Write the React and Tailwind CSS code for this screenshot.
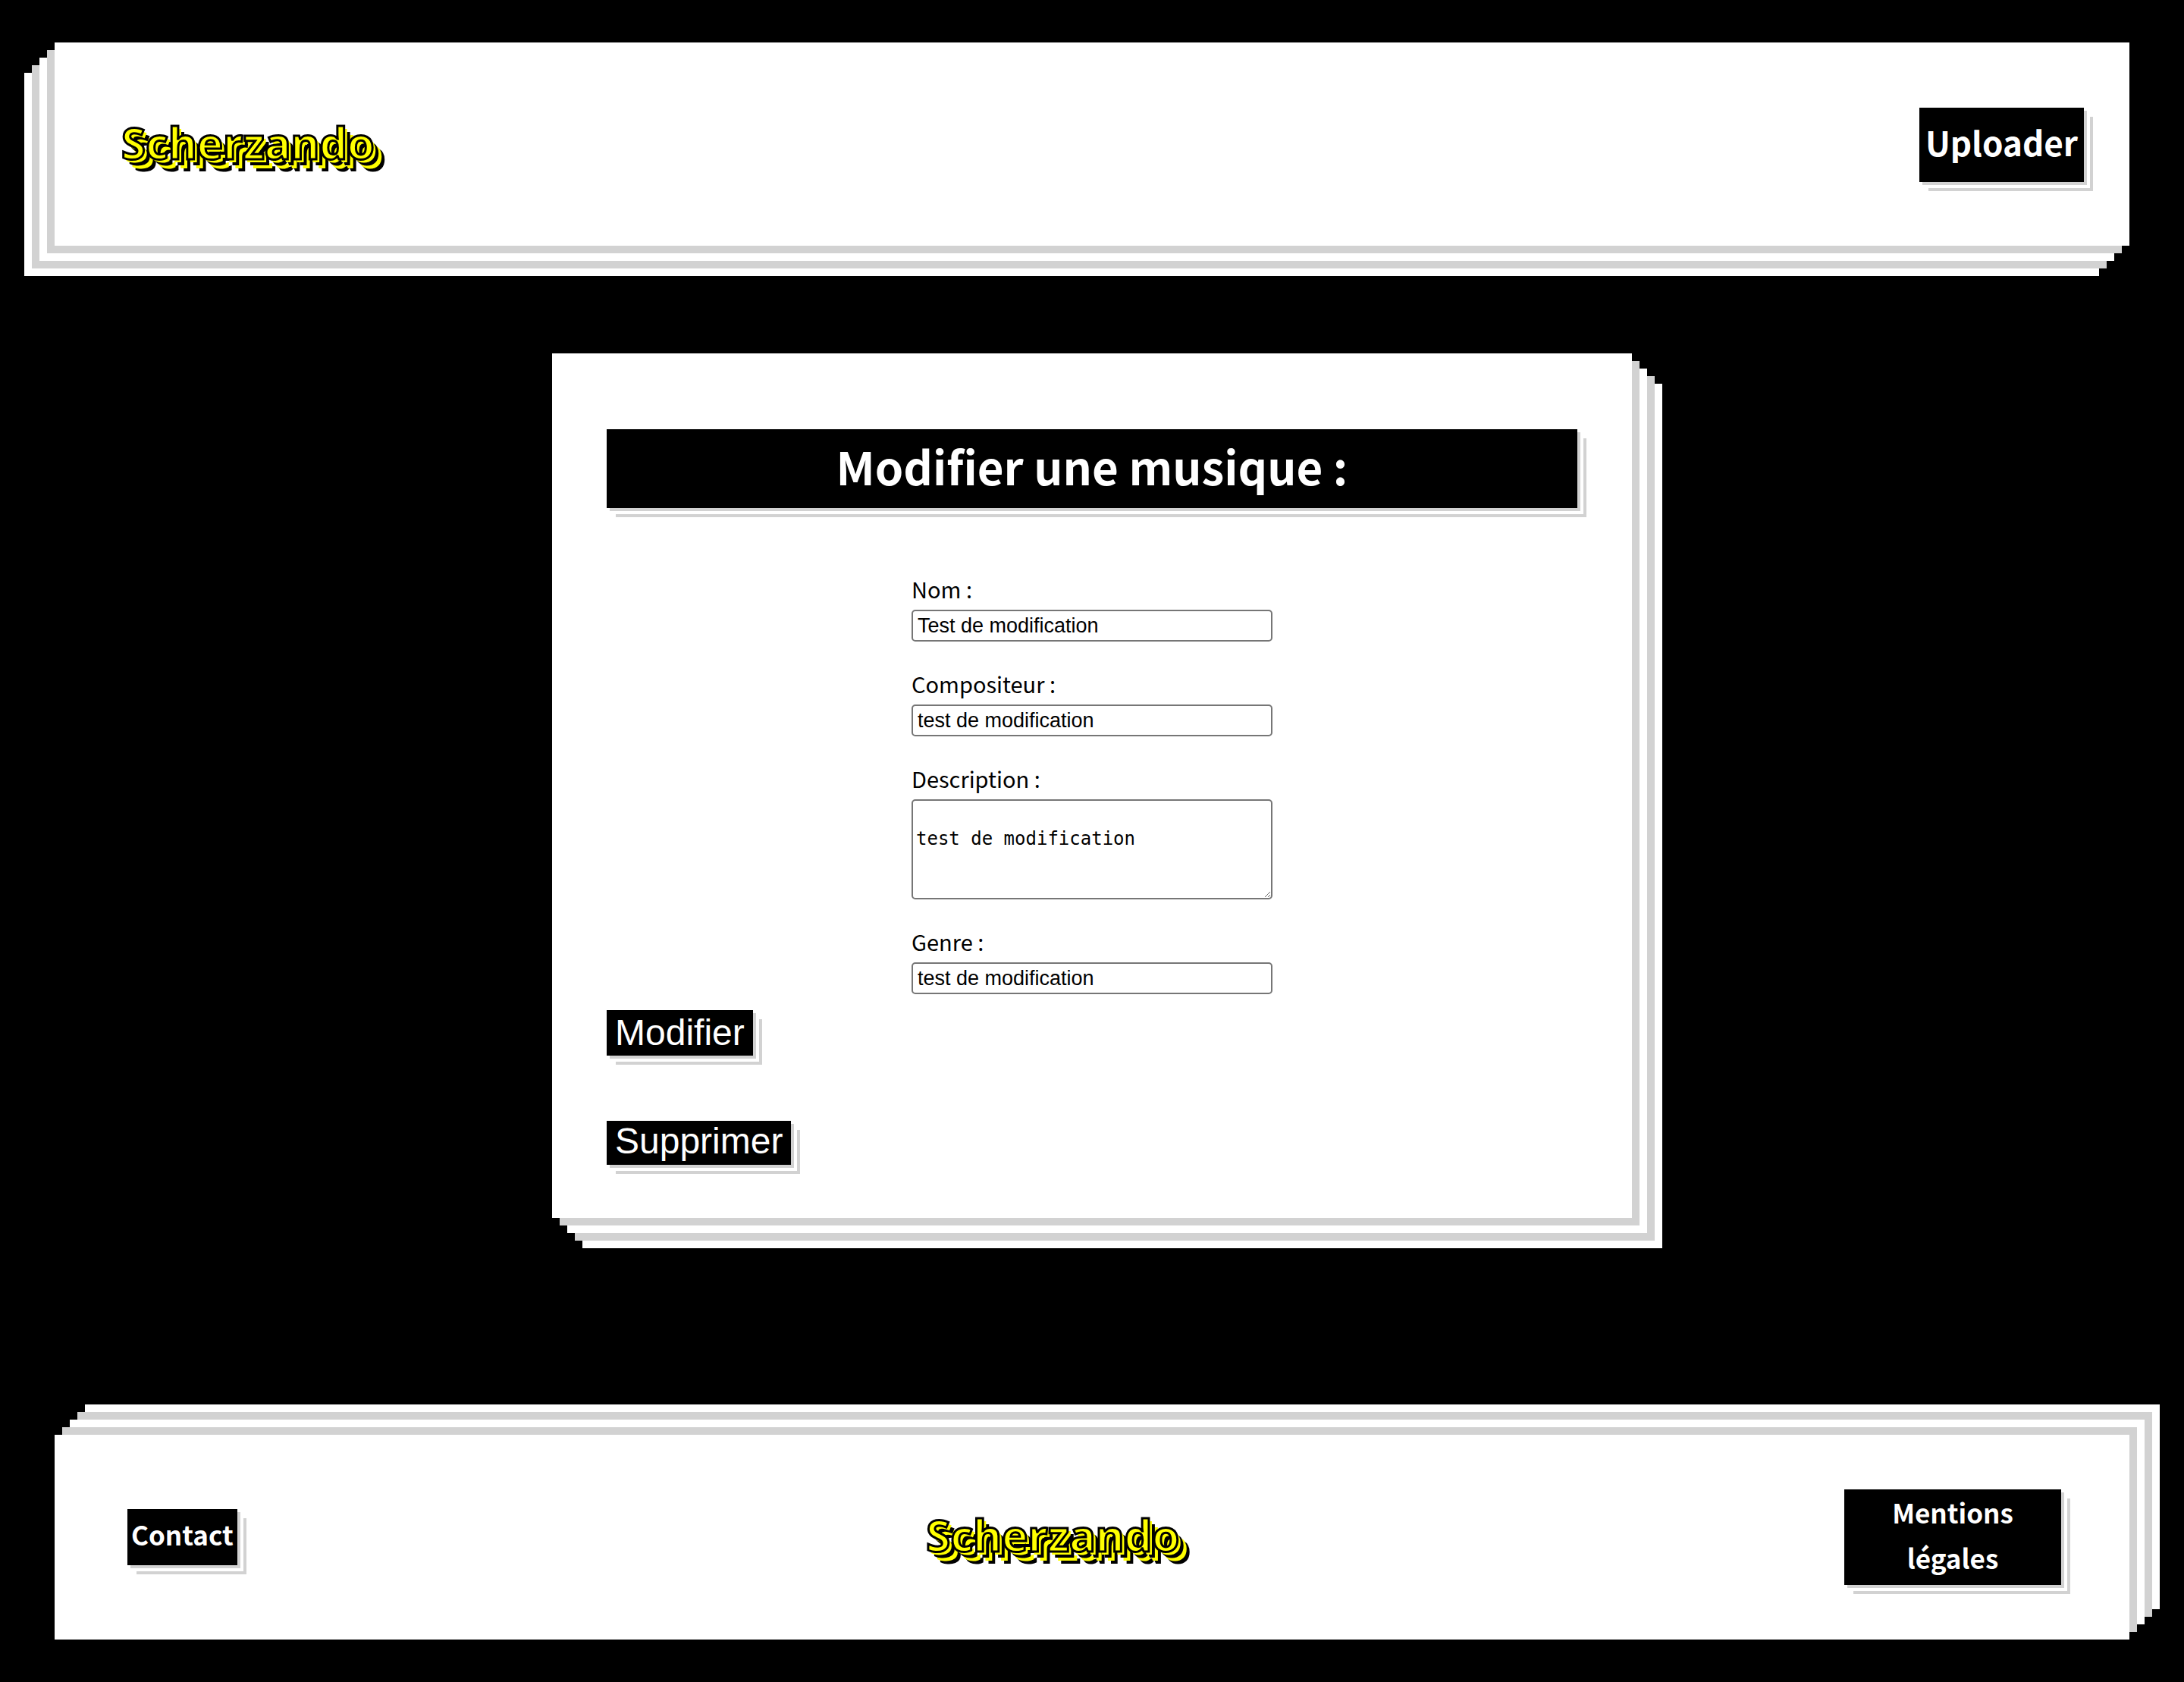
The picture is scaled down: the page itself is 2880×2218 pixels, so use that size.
const sans = "font-['Noto_Sans_CJK_SC',sans-serif]";
const tag =
  "bg-black text-white shadow-[4px_4px_0_#d2d2d2,8px_8px_0_#fff,12px_12px_0_#d2d2d2]";

function Logo({ className = "" }) {
  return (
    <a
      href="#accueil"
      className={`pb-1.5 font-['Noto_Sans',sans-serif] text-[58px] leading-[72px] font-bold text-[#ffff00] [-webkit-text-stroke:3px_#000] [text-shadow:4px_4px_0_#ff0,8px_8px_0_#000,12px_12px_0_#ff0,16px_16px_0_#000] ${className}`}
    >
      Scherzando
    </a>
  );
}

function Field({ id, label, children }) {
  return (
    <div className="flex flex-col">
      <label htmlFor={id} className="pb-2 text-[29px] leading-[39px]">
        {label}
      </label>
      {children}
    </div>
  );
}

const box = "block w-full rounded-[5px] border-2 border-[#767676] bg-white text-black";

function TextInput(props) {
  return (
    <input
      type="text"
      className={`${box} h-[42px] px-1.5 font-['Liberation_Sans',Arial,sans-serif] text-[27px] leading-8`}
      {...props}
    />
  );
}

export default function App() {
  return (
    <div className={`min-h-screen bg-black pt-14 pb-14 text-black ${sans}`}>
      <header className="mx-[2.5%] flex h-[268px] items-center justify-between bg-white pt-0.5 pr-[60px] pl-[88px] shadow-[-10px_10px_0_#d2d2d2,-20px_20px_0_#fff,-30px_30px_0_#d2d2d2,-40px_40px_0_#fff]">
        <Logo />
        <a
          href="#uploader"
          className={`${tag} px-2 pb-2 text-[44px] leading-[90px] font-bold`}
        >
          Uploader
        </a>
      </header>

      <main className="mx-auto mt-[142px] max-w-[1424px] bg-white px-[72px] pt-[100px] pb-[70px] shadow-[10px_10px_0_#d2d2d2,20px_20px_0_#fff,30px_30px_0_#d2d2d2,40px_40px_0_#fff]">
        <h1 className={`${tag} pb-2 text-center text-[60px] leading-[96px] font-bold`}>
          Modifier une musique :
        </h1>
        <form className="mt-[87px]" onSubmit={(e) => e.preventDefault()}>
          <div className="mx-auto flex max-w-[476px] flex-col gap-9">
            <Field id="nom" label="Nom :">
              <TextInput id="nom" defaultValue="Test de modification" />
            </Field>
            <Field id="compositeur" label="Compositeur :">
              <TextInput id="compositeur" defaultValue="test de modification" />
            </Field>
            <Field id="description" label="Description :">
              <textarea
                id="description"
                defaultValue={"\ntest de modification"}
                className={`${box} h-[132px] resize overflow-auto p-1 font-['DejaVu_Sans_Mono',monospace] text-[24px] leading-[31px]`}
              />
            </Field>
            <Field id="genre" label="Genre :">
              <TextInput id="genre" defaultValue="test de modification" />
            </Field>
          </div>
          <div className="mt-[21px] flex flex-col items-start gap-[86px] font-['Liberation_Sans',Arial,sans-serif] text-5xl">
            <button type="submit" className={`${tag} px-[11px] leading-[60px]`}>
              Modifier
            </button>
            <button type="button" className={`${tag} px-[11px] pb-1 leading-[54px]`}>
              Supprimer
            </button>
          </div>
        </form>
      </main>

      <footer className="mx-[2.5%] mt-[286px] flex h-[270px] items-center justify-between bg-white pr-[90px] pl-24 shadow-[10px_-10px_0_#d2d2d2,20px_-20px_0_#fff,30px_-30px_0_#d2d2d2,40px_-40px_0_#fff]">
        <a
          href="#contact"
          className={`${tag} px-[5px] pb-2 text-[35px] leading-[66px] font-bold`}
        >
          Contact
        </a>
        <Logo className="pl-8" />
        <a
          href="#mentions-legales"
          className={`${tag} w-[286px] px-6 pb-1.5 text-center text-[35px] leading-[60px] font-bold`}
        >
          Mentions
          <br />
          légales
        </a>
      </footer>
    </div>
  );
}
